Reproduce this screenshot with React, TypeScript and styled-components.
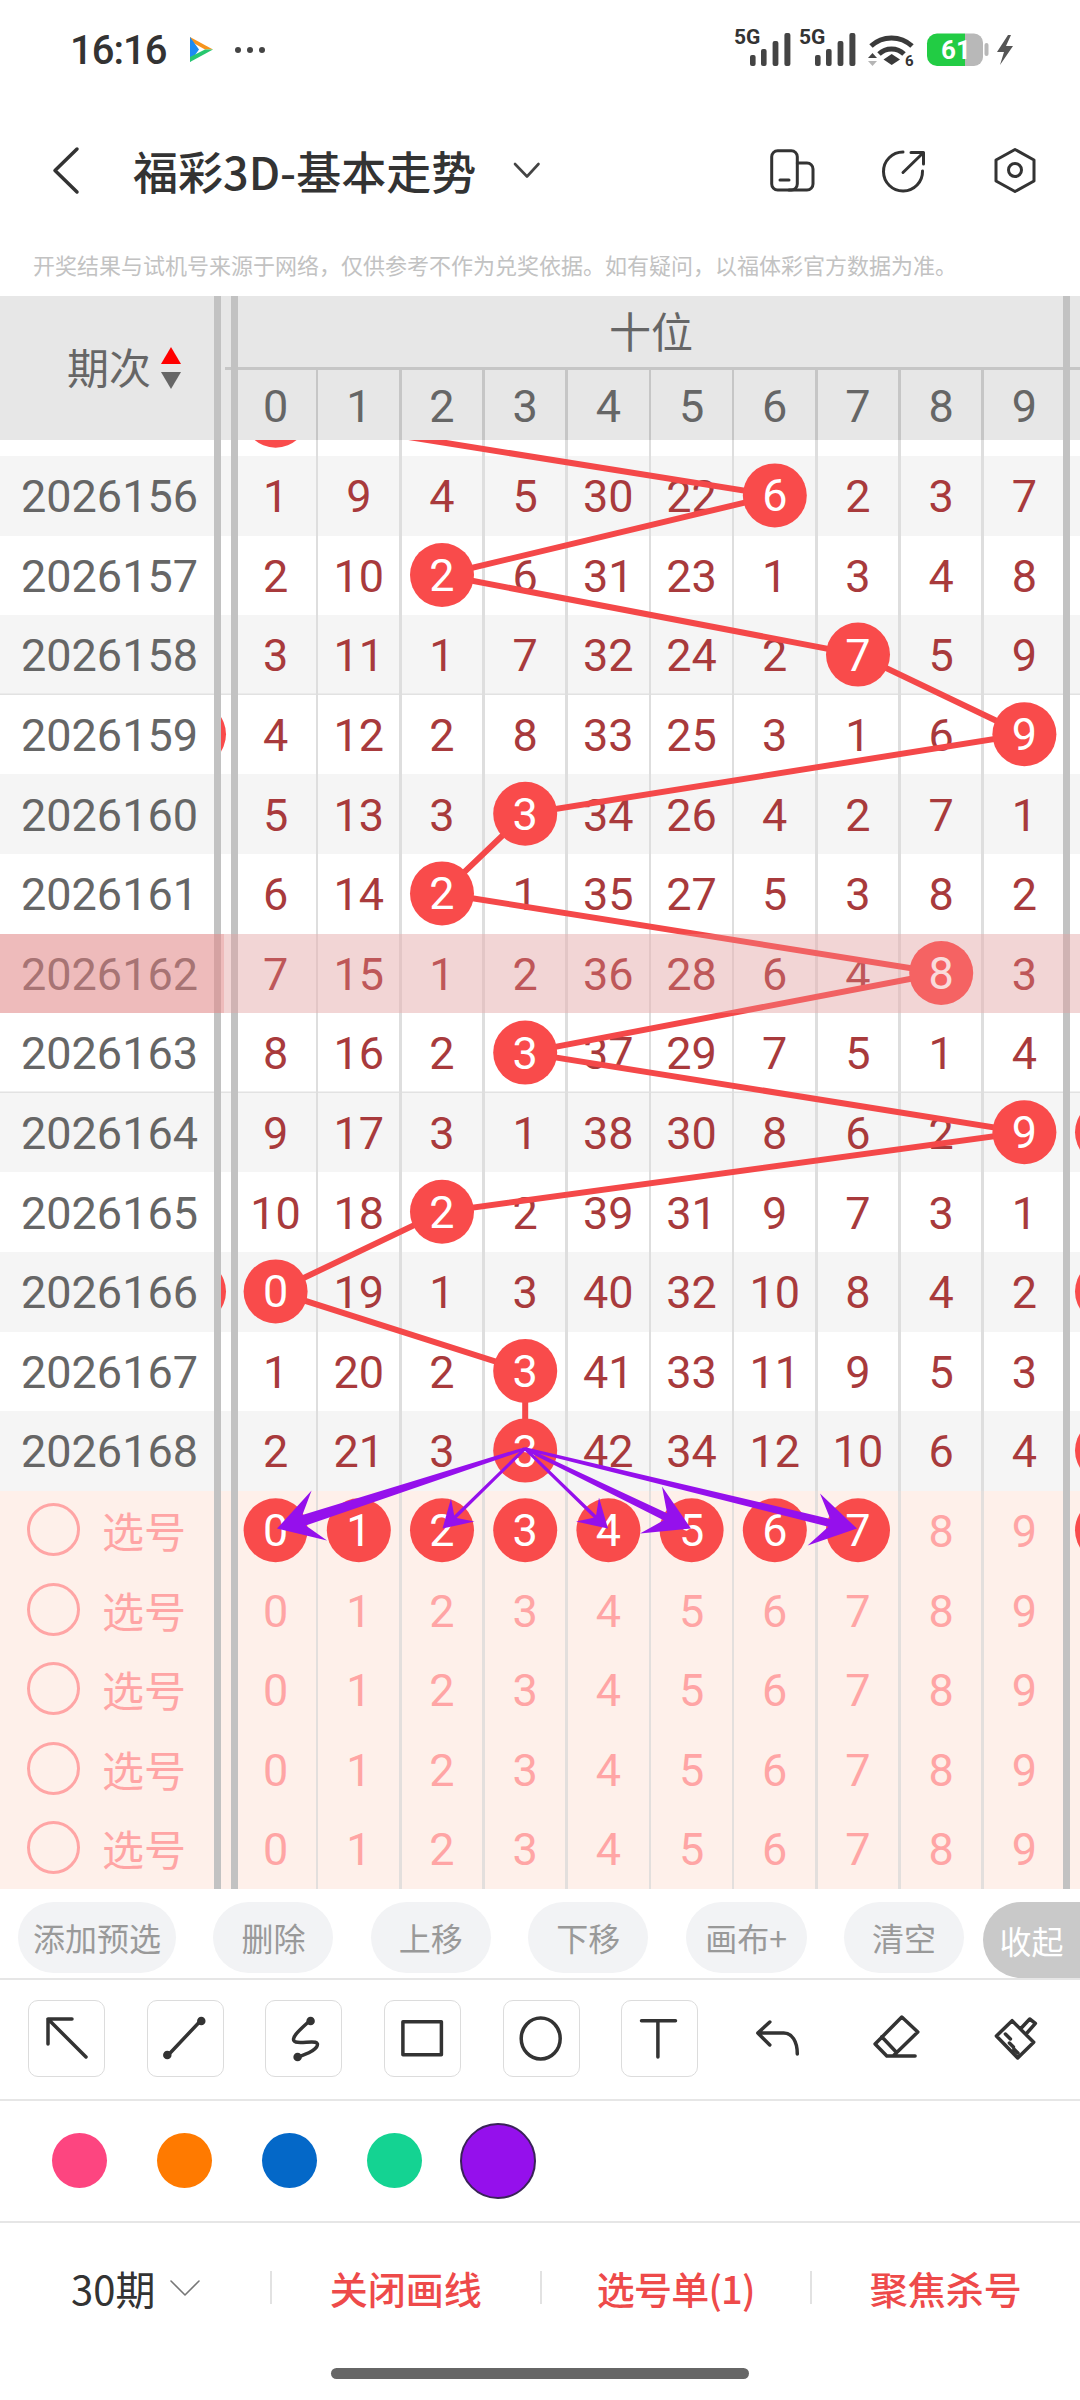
import React from "react";
import styled, { createGlobalStyle } from "styled-components";

const NUM_FONT = `Roboto, "Noto Sans CJK SC", sans-serif`;
const CJK_FONT = `"Noto Sans CJK SC", Roboto, sans-serif`;

const ROW_H = 79.6;
const BODY_TOP = 376.4;
const CELL_W = 83.2;
const FIRST_CX = 275.6;
const BALL_RED = "#f94b4b";

const GlobalStyle = createGlobalStyle`
  html, body {
    margin: 0;
    padding: 0;
    background: #fff;
  }
  body {
    font-family: ${CJK_FONT};
  }
`;

const Page = styled.div`
  width: 1080px;
  height: 2400px;
  overflow: hidden;
  background: #fff;
  display: flex;
  flex-direction: column;
`;

/* status bar */
const StatusBar = styled.div`
  height: 100px;
  flex: none;
  display: flex;
  align-items: center;
  padding: 0 67px 0 70px;
  box-sizing: border-box;
`;

const Clock = styled.div`
  font-family: ${NUM_FONT};
  font-size: 40px;
  font-weight: 500;
  color: #333;
  letter-spacing: -1px;
  width: 114px;
`;

const AppIcon = styled.svg`
  flex: none;
`;

const MoreDots = styled.svg`
  flex: none;
  margin-left: 16px;
`;

const StatusRight = styled.svg`
  margin-left: auto;
`;

const StatusLabel = styled.text`
  font-family: ${NUM_FONT};
  font-weight: 700;
  fill: #333;
`;

const BatteryLabel = styled.text`
  font-family: ${NUM_FONT};
  font-weight: 700;
  font-size: 26px;
  fill: #fff;
`;

/* nav */
const Nav = styled.div`
  height: 140px;
  flex: none;
  display: flex;
  align-items: center;
  padding: 0 40px;
  box-sizing: border-box;
`;

const Stroke = styled.svg<{ $w?: number; $color?: string }>`
  flex: none;
  display: block;
  fill: none;
  stroke: ${(p) => p.$color || "#333"};
  stroke-width: ${(p) => p.$w || 3.5};
  stroke-linecap: round;
  stroke-linejoin: round;
`;

const Title = styled.div`
  margin-left: 43px;
  font-size: 45px;
  font-weight: 500;
  color: #333;
  white-space: nowrap;
  width: 341px;
`;

const TitleCaret = styled.div`
  margin-left: 36px;
`;

const NavActions = styled.div`
  margin-left: auto;
  display: flex;
  gap: 62px;
`;

const Note = styled.div`
  height: 56px;
  flex: none;
  padding: 9px 0 0 33px;
  box-sizing: border-box;
  font-size: 22px;
  line-height: 30px;
  color: #c2c2c2;
  white-space: nowrap;
`;

/* table */
const Table = styled.div`
  position: relative;
  flex: none;
  height: 1592.8px;
  overflow: hidden;
`;

const Rail = styled.div<{ $left: number }>`
  position: absolute;
  top: 0;
  bottom: 0;
  left: ${(p) => p.$left}px;
  width: 7px;
  background: #c2c2c2;
  z-index: 1;
`;

const Head = styled.div`
  display: flex;
  height: 144px;
  background: #e7e7e7;
  color: #666;
`;

const PeriodHead = styled.div`
  width: 221px;
  flex: none;
  display: flex;
  align-items: center;
  padding: 0 0 6px 67px;
  box-sizing: border-box;
  gap: 10px;
  font-size: 42px;
`;

const SortStack = styled.div`
  display: flex;
  flex-direction: column;
  gap: 8px;
  margin-top: 6px;
`;

const Triangle = styled.div<{ $down?: boolean }>`
  width: 0;
  height: 0;
  border-left: 10.5px solid transparent;
  border-right: 10.5px solid transparent;
  ${(p) =>
    p.$down ? "border-top: 17px solid #666;" : "border-bottom: 17px solid #f00;"}
`;

const HeadTrack = styled.div`
  flex: 1;
  display: flex;
  flex-direction: column;
`;

const GroupName = styled.div`
  height: 74px;
  box-sizing: border-box;
  margin-left: 4px;
  border-bottom: 3px solid #c6c6c6;
  display: flex;
  align-items: center;
  font-size: 42px;
  padding: 0 0 5px 384px;
`;

const HeadDigits = styled.div`
  flex: 1;
  display: grid;
  grid-template-columns: 13px repeat(10, ${CELL_W}px);
`;

const HeadDigit = styled.div<{ $line?: boolean }>`
  position: relative;
  display: flex;
  align-items: center;
  justify-content: center;
  padding-top: 2px;
  font-family: ${NUM_FONT};
  font-size: 45px;
  &::after {
    content: "";
    display: ${(p) => (p.$line ? "block" : "none")};
    position: absolute;
    top: 0;
    bottom: 0;
    right: -1.3px;
    width: 2.6px;
    background: #c6c6c6;
  }
`;

const BodyClip = styled.div`
  height: 1448.8px;
  overflow: hidden;
`;

const BodyInner = styled.div`
  position: relative;
  margin-top: -63.6px;
`;

const Row = styled.div<{ $tone: "plain" | "stripe" | "pick"; $rule?: boolean }>`
  display: grid;
  grid-template-columns: 224px 10px repeat(10, ${CELL_W}px) 14px;
  height: ${ROW_H}px;
  background: ${(p) =>
    p.$tone === "pick" ? "#fef0ea" : p.$tone === "stripe" ? "#f5f5f5" : "#fff"};
  ${(p) => p.$rule && "box-shadow: inset 0 -1.4px 0 #e2e2e2, 0 1.3px 0 #e2e2e2;"}
`;

const PeriodCell = styled.div`
  display: flex;
  align-items: center;
  padding: 2px 0 0 21px;
  font-family: ${NUM_FONT};
  font-size: 45px;
  color: #666;
`;

const PickCell = styled.div`
  display: flex;
  align-items: center;
  padding: 0 0 2px 27px;
  gap: 22px;
  font-size: 42px;
  color: #ffa5a5;
`;

const PickRing = styled.div`
  width: 53px;
  height: 53px;
  box-sizing: border-box;
  border: 3.5px solid #ffa5a5;
  border-radius: 50%;
`;

const GapCell = styled.div``;

const Cell = styled.div<{ $pick?: boolean; $line?: boolean }>`
  position: relative;
  display: flex;
  align-items: center;
  justify-content: center;
  padding-top: 2px;
  font-family: ${NUM_FONT};
  font-size: 45px;
  color: ${(p) => (p.$pick ? "#ffa5a5" : "#a83a3c")};
  &::after {
    content: "";
    display: ${(p) => (p.$line ? "block" : "none")};
    position: absolute;
    top: 0;
    bottom: 0;
    right: -1.3px;
    width: 2.6px;
    background: ${(p) => (p.$pick ? "#e3dfdd" : "#dedede")};
  }
`;

const Chart = styled.svg`
  position: absolute;
  top: 0;
  left: 0;
  z-index: 2;
`;

const BallDigit = styled.text`
  font-family: ${NUM_FONT};
  font-size: 45px;
  fill: #fff;
  text-anchor: middle;
`;

const Band = styled.div`
  position: absolute;
  top: ${ROW_H * 7}px;
  left: 0;
  right: 0;
  height: ${ROW_H}px;
  z-index: 3;
  display: flex;
`;

const BandLeft = styled.div`
  width: 224px;
  background: rgba(231, 129, 129, 0.5);
`;

const BandRight = styled.div`
  flex: 1;
  background: rgba(236, 150, 150, 0.33);
`;

/* action pills */
const Actions = styled.div`
  height: 91px;
  flex: none;
  box-sizing: border-box;
  padding: 13px 0 0 18px;
  display: flex;
  align-items: flex-start;
  gap: 37.4px;
  border-bottom: 2px solid #e6e6e6;
`;

const Pill = styled.div<{ $w: number }>`
  width: ${(p) => p.$w}px;
  height: 71px;
  flex: none;
  border-radius: 36px;
  background: #f2f3f5;
  color: #999;
  font-size: 32px;
  display: flex;
  align-items: center;
  justify-content: center;
`;

const CollapsePill = styled.div`
  width: 97px;
  height: 76px;
  flex: none;
  margin-left: -18.4px;
  border-radius: 38px 0 0 38px;
  background: #c9c9c9;
  color: #fff;
  font-size: 32px;
  display: flex;
  align-items: center;
  justify-content: center;
`;

/* drawing tools */
const Tools = styled.div`
  height: 121px;
  flex: none;
  box-sizing: border-box;
  padding: 20px 0 0 28px;
  display: flex;
  align-items: flex-start;
  gap: 41.7px;
  border-bottom: 2px solid #e6e6e6;
`;

const ToolBox = styled.div<{ $framed?: boolean }>`
  width: 77px;
  height: 77px;
  flex: none;
  box-sizing: border-box;
  border-radius: 10px;
  border: 1.5px solid ${(p) => (p.$framed ? "#dcdcdc" : "transparent")};
  display: flex;
  align-items: center;
  justify-content: center;
`;

const ToolGlyph = styled(Stroke)`
  margin: -1.5px;
`;

/* colours */
const Swatches = styled.div`
  height: 122px;
  flex: none;
  box-sizing: border-box;
  padding-left: 51.5px;
  display: flex;
  align-items: center;
  gap: 50px;
  border-bottom: 2px solid #e6e6e6;
`;

const Swatch = styled.div<{ $color: string; $on?: boolean }>`
  flex: none;
  box-sizing: border-box;
  width: ${(p) => (p.$on ? 76 : 55)}px;
  height: ${(p) => (p.$on ? 76 : 55)}px;
  margin-left: ${(p) => (p.$on ? -12 : 0)}px;
  border-radius: 50%;
  background: ${(p) => p.$color};
  border: ${(p) => (p.$on ? "2px solid #3a2358" : "none")};
`;

/* bottom bar */
const BottomBar = styled.div`
  height: 130px;
  flex: none;
  display: flex;
  align-items: center;
`;

const RangePicker = styled.div`
  width: 270px;
  flex: none;
  box-sizing: border-box;
  padding-left: 71px;
  display: flex;
  align-items: center;
  gap: 14px;
  font-size: 40px;
  color: #333;
`;

const Divider = styled.div`
  width: 1.5px;
  height: 33px;
  flex: none;
  background: #e2e2e2;
`;

const BottomAction = styled.div<{ $tight?: boolean }>`
  flex: 1;
  text-align: center;
  font-size: 38px;
  font-weight: 500;
  color: #ee4a4a;
  white-space: nowrap;
  letter-spacing: ${(p) => (p.$tight ? "-0.8px" : "0")};
`;

const HomeBar = styled.div`
  width: 418px;
  height: 11px;
  margin: 15px auto 0;
  border-radius: 6px;
  background: #666;
`;

type PeriodRow = { id: number; cells: number[]; ball: number };

const periods: PeriodRow[] = [
  { id: 2026156, cells: [1, 9, 4, 5, 30, 22, 6, 2, 3, 7], ball: 6 },
  { id: 2026157, cells: [2, 10, 2, 6, 31, 23, 1, 3, 4, 8], ball: 2 },
  { id: 2026158, cells: [3, 11, 1, 7, 32, 24, 2, 7, 5, 9], ball: 7 },
  { id: 2026159, cells: [4, 12, 2, 8, 33, 25, 3, 1, 6, 9], ball: 9 },
  { id: 2026160, cells: [5, 13, 3, 3, 34, 26, 4, 2, 7, 1], ball: 3 },
  { id: 2026161, cells: [6, 14, 2, 1, 35, 27, 5, 3, 8, 2], ball: 2 },
  { id: 2026162, cells: [7, 15, 1, 2, 36, 28, 6, 4, 8, 3], ball: 8 },
  { id: 2026163, cells: [8, 16, 2, 3, 37, 29, 7, 5, 1, 4], ball: 3 },
  { id: 2026164, cells: [9, 17, 3, 1, 38, 30, 8, 6, 2, 9], ball: 9 },
  { id: 2026165, cells: [10, 18, 2, 2, 39, 31, 9, 7, 3, 1], ball: 2 },
  { id: 2026166, cells: [0, 19, 1, 3, 40, 32, 10, 8, 4, 2], ball: 0 },
  { id: 2026167, cells: [1, 20, 2, 3, 41, 33, 11, 9, 5, 3], ball: 3 },
  { id: 2026168, cells: [2, 21, 3, 3, 42, 34, 12, 10, 6, 4], ball: 3 },
];

const digits = [0, 1, 2, 3, 4, 5, 6, 7, 8, 9];
const cx = (col: number) => FIRST_CX + col * CELL_W;
// row 0 is the period scrolled away under the head, only its ball still shows
const cy = (row: number) => BODY_TOP + (row + 0.5) * ROW_H;

type Pt = [number, number];
const TAIL: Pt = [525, 1449];

const arrowShape = (tip: Pt, a: Pt, b: Pt, width: number) => {
  const mid: Pt = [(a[0] + b[0]) / 2, (a[1] + b[1]) / 2];
  const notch: Pt = [
    tip[0] + (mid[0] - tip[0]) * 0.64,
    tip[1] + (mid[1] - tip[1]) * 0.64,
  ];
  const dx = notch[0] - TAIL[0];
  const dy = notch[1] - TAIL[1];
  const len = Math.hypot(dx, dy);
  const nx = -dy / len;
  const ny = dx / len;
  const aSide = (a[0] - notch[0]) * nx + (a[1] - notch[1]) * ny > 0;
  const plus = aSide ? a : b;
  const minus = aSide ? b : a;
  const pts: Pt[] = [
    [TAIL[0] + nx * 1.5, TAIL[1] + ny * 1.5],
    [notch[0] + (nx * width) / 2, notch[1] + (ny * width) / 2],
    plus,
    tip,
    minus,
    [notch[0] - (nx * width) / 2, notch[1] - (ny * width) / 2],
    [TAIL[0] - nx * 1.5, TAIL[1] - ny * 1.5],
  ];
  return pts.map((p) => p.join(",")).join(" ");
};

const arrows = [
  arrowShape([277, 1529], [311.6, 1491], [327, 1541], 11),
  arrowShape([442.5, 1529], [451, 1499], [474.5, 1522], 3.5),
  arrowShape([608, 1529], [599, 1498], [576, 1522], 3.5),
  arrowShape([691, 1529], [662, 1487], [640, 1534], 8),
  arrowShape([857, 1529], [820, 1494], [807.6, 1546], 8),
];

const clippedLeft = [4, 11];
const clippedRight = [9, 11, 13, 14];

const Drawing: React.FC = () => {
  const line = [
    `${cx(0)},${cy(0)}`,
    ...periods.map((p, i) => `${cx(p.ball)},${cy(i + 1)}`),
  ].join(" ");
  return (
    <Chart
      width={1080}
      height={ROW_H * 19}
      viewBox={`0 ${BODY_TOP} 1080 ${ROW_H * 19}`}
    >
      <defs>
        <clipPath id="gapClip">
          <rect x="221" y={BODY_TOP} width="10" height={ROW_H * 19} />
        </clipPath>
      </defs>
      <polyline points={line} fill="none" stroke="#f44849" strokeWidth="6" />
      {clippedLeft.map((r) => (
        <circle
          key={r}
          cx="194"
          cy={cy(r)}
          r="32"
          fill={BALL_RED}
          clipPath="url(#gapClip)"
        />
      ))}
      {clippedRight.map((r) => (
        <circle key={r} cx="1107" cy={cy(r)} r="32" fill={BALL_RED} />
      ))}
      <circle cx={cx(0)} cy={cy(0)} r="32" fill={BALL_RED} />
      {periods.map((p, i) => (
        <g key={p.id}>
          <circle cx={cx(p.ball)} cy={cy(i + 1)} r="32" fill={BALL_RED} />
          <BallDigit x={cx(p.ball)} y={cy(i + 1) + 16}>
            {p.ball}
          </BallDigit>
        </g>
      ))}
      {digits.slice(0, 8).map((d) => (
        <g key={d}>
          <circle cx={cx(d)} cy={cy(14)} r="32" fill={BALL_RED} />
          <BallDigit x={cx(d)} y={cy(14) + 16}>
            {d}
          </BallDigit>
        </g>
      ))}
      {arrows.map((pts, i) => (
        <polygon key={i} points={pts} fill="#9510ec" />
      ))}
    </Chart>
  );
};

const Signal: React.FC<{ x: number }> = ({ x }) => (
  <g>
    <StatusLabel x={x} y="44" fontSize="21">
      5G
    </StatusLabel>
    <rect x={x + 16} y="55" width="5.6" height="11" rx="2" fill="#444" />
    <rect x={x + 27} y="49" width="5.6" height="17" rx="2" fill="#444" />
    <rect x={x + 38.6} y="41" width="5.8" height="25" rx="2" fill="#444" />
    <rect x={x + 50.4} y="33" width="6" height="33" rx="2" fill="#444" />
  </g>
);

const StatusIcons: React.FC = () => (
  <StatusRight width="285" height="50" viewBox="728 25 285 50">
    <Signal x={734} />
    <Signal x={799} />
    <g fill="none" stroke="#3a3a3a" strokeWidth="5">
      <path d="M871 46 A30 30 0 0 1 912 46" />
      <path d="M879 54 A18 18 0 0 1 904 54" />
    </g>
    <polygon points="891.7,54 900,59.5 891.7,65 883.5,59.5" fill="#3a3a3a" />
    <polygon points="872.5,53 877,58 868,58" fill="#444" />
    <polygon points="868,61 877,61 872.5,66" fill="#b5b5b5" />
    <StatusLabel x="905" y="66" fontSize="15">
      6
    </StatusLabel>
    <path
      d="M937 33.5 H965 V66 H937 A10 10 0 0 1 927 56 V43.5 A10 10 0 0 1 937 33.5 Z"
      fill="#22cc44"
    />
    <path
      d="M965 33.5 H974 A9 9 0 0 1 983 42.5 V57 A9 9 0 0 1 974 66 H965 Z"
      fill="#b8b8b8"
    />
    <rect x="984.5" y="43" width="4" height="13" rx="2" fill="#b8b8b8" />
    <BatteryLabel x="941" y="59">
      61
    </BatteryLabel>
    <polygon
      points="1008,35 997,52 1004,52 1000,65 1013,46 1006,46 1011,35"
      fill="#555"
    />
  </StatusRight>
);

const toolX = (i: number) => 28 + 118.7 * i;
const toolBox = (i: number) => `${toolX(i)} 2001 77 77`;

const toolIcons: React.ReactNode[] = [
  <path d="M86 2058 L48 2020 M72 2020 H48 V2045" />,
  <>
    <path d="M167 2057 L201 2021" />
    <circle cx="167" cy="2056" r="2.5" fill="#333" />
    <circle cx="201" cy="2022" r="2.5" fill="#333" />
  </>,
  <>
    <path d="M311 2021 C301 2030 289 2040 296 2043 C304 2045 322 2039 317 2048 C312 2055 303 2055 298 2059" />
    <circle cx="311" cy="2022" r="2.5" fill="#333" />
    <circle cx="298" cy="2058" r="2.5" fill="#333" />
  </>,
  <rect x="403" y="2022.7" width="38.5" height="33" />,
  <ellipse cx="540.5" cy="2039.5" rx="19.5" ry="20.5" />,
  <path d="M642 2021.7 H676 M658.4 2021.7 V2058" />,
  <path d="M770 2023 L758 2034 L770 2046 M758 2034 H784 C792 2034 797.5 2042 797.5 2055" />,
  <path d="M901.7 2018 L917.7 2033 L893 2057 H886.7 L875 2045 Z M881.7 2037.7 L896 2053 M888 2057 H915" />,
  <path d="M1011.7 2021.7 L996 2037 L1017.3 2059 L1033.3 2043.3 Z M1020 2030 L1029.3 2020 L1035 2024.3 L1025.7 2035 M1005 2035 L1010 2040 M1009 2044 L1013 2048 M1013.5 2050 L1017.5 2054" />,
];

const App: React.FC = () => {
  return (
    <Page>
      <GlobalStyle />
      <StatusBar>
        <Clock>16:16</Clock>
        <AppIcon width="34" height="36" viewBox="185 33 34 36">
          <rect x="185" y="33" width="34" height="36" rx="8" fill="#fff" />
          <path d="M191 38 L214 50.5 L206 50.5 L191 42 Z" fill="#f7941d" />
          <path d="M191 38 L200 50.5 L191 63 Z" fill="#1d8bf1" />
          <path d="M191 63 L214 50.5 L206 50.5 L191 58 Z" fill="#28c76f" />
        </AppIcon>
        <MoreDots width="32" height="8" viewBox="234 46 32 8">
          <circle cx="238" cy="50" r="3" fill="#444" />
          <circle cx="250" cy="50" r="3" fill="#444" />
          <circle cx="262" cy="50" r="3" fill="#444" />
        </MoreDots>
        <StatusIcons />
      </StatusBar>

      <Nav>
        <Stroke width="50" height="60" viewBox="40 140 50 60">
          <path d="M77 149 L55 170.5 L77 192" />
        </Stroke>
        <Title>福彩3D-基本走势</Title>
        <TitleCaret>
          <Stroke width="32" height="20" viewBox="510 159 32 20" $w={2.6} $color="#444">
            <path d="M515 163 L527 175.5 L538.5 163" />
          </Stroke>
        </TitleCaret>
        <NavActions>
          <Stroke width="50" height="50" viewBox="772 146 50 50" $w={3}>
            <rect x="777.7" y="151.7" width="25.6" height="39.3" rx="6" />
            <path d="M803.3 164 H813 A6 6 0 0 1 819 170 V185 A6 6 0 0 1 813 191 H795" />
            <path d="M786 181 H795" />
          </Stroke>
          <Stroke width="50" height="50" viewBox="878 146 50 50" $w={3}>
            <path d="M903 153 A19.5 19.5 0 1 0 922.5 172" />
            <path d="M903 173.5 L923 154 M911 153.5 H923.5 V165" />
          </Stroke>
          <Stroke width="50" height="50" viewBox="990 145 50 50" $w={3}>
            <path d="M1015 149.5 L1034 160 V181 L1015 191.5 L996 181 V160 Z" />
            <circle cx="1015" cy="170" r="6.5" />
          </Stroke>
        </NavActions>
      </Nav>

      <Note>
        {"开奖结果与试机号来源于网络\uFF0C仅供参考不作为兑奖依据。如有疑问\uFF0C以福体彩官方数据为准。"}
      </Note>

      <Table>
        <Rail $left={213.5} />
        <Rail $left={231} />
        <Rail $left={1063} />
        <Head>
          <PeriodHead>
            期次
            <SortStack>
              <Triangle />
              <Triangle $down />
            </SortStack>
          </PeriodHead>
          <HeadTrack>
            <GroupName>十位</GroupName>
            <HeadDigits>
              <div />
              {digits.map((d) => (
                <HeadDigit key={d} $line={d < 9}>
                  {d}
                </HeadDigit>
              ))}
            </HeadDigits>
          </HeadTrack>
        </Head>
        <BodyClip>
          <BodyInner>
            <Row $tone="plain">
              <PeriodCell />
              <GapCell />
              {digits.map((d) => (
                <Cell key={d} $line={d < 9} />
              ))}
            </Row>
            {periods.map((p, i) => (
              <Row
                key={p.id}
                $tone={i % 2 === 0 ? "stripe" : "plain"}
                $rule={i === 2 || i === 7}
              >
                <PeriodCell>{p.id}</PeriodCell>
                <GapCell />
                {p.cells.map((v, c) => (
                  <Cell key={c} $line={c < 9}>
                    {c === p.ball ? "" : v}
                  </Cell>
                ))}
              </Row>
            ))}
            {[0, 1, 2, 3, 4].map((r) => (
              <Row key={r} $tone="pick">
                <PickCell>
                  <PickRing />
                  选号
                </PickCell>
                <GapCell />
                {digits.map((d) => (
                  <Cell key={d} $pick $line={d < 9}>
                    {r === 0 && d < 8 ? "" : d}
                  </Cell>
                ))}
              </Row>
            ))}
            <Drawing />
            <Band>
              <BandLeft />
              <BandRight />
            </Band>
          </BodyInner>
        </BodyClip>
      </Table>

      <Actions>
        <Pill $w={158}>添加预选</Pill>
        <Pill $w={120}>删除</Pill>
        <Pill $w={120}>上移</Pill>
        <Pill $w={120}>下移</Pill>
        <Pill $w={121}>画布+</Pill>
        <Pill $w={120}>清空</Pill>
        <CollapsePill>收起</CollapsePill>
      </Actions>

      <Tools>
        {toolIcons.map((icon, i) => (
          <ToolBox key={i} $framed={i < 6}>
            <ToolGlyph width="77" height="77" viewBox={toolBox(i)}>
              {icon}
            </ToolGlyph>
          </ToolBox>
        ))}
      </Tools>

      <Swatches>
        <Swatch $color="#fd4580" />
        <Swatch $color="#ff7a00" />
        <Swatch $color="#0468c8" />
        <Swatch $color="#14d392" />
        <Swatch $color="#9510ec" $on />
      </Swatches>

      <BottomBar>
        <RangePicker>
          30期
          <Stroke width="32" height="20" viewBox="0 0 32 20" $w={1.6} $color="#777">
            <path d="M2 3 L16 17 L30 3" />
          </Stroke>
        </RangePicker>
        <Divider />
        <BottomAction>关闭画线</BottomAction>
        <Divider />
        <BottomAction $tight>选号单(1)</BottomAction>
        <Divider />
        <BottomAction>聚焦杀号</BottomAction>
      </BottomBar>
      <HomeBar />
    </Page>
  );
};

export default App;
